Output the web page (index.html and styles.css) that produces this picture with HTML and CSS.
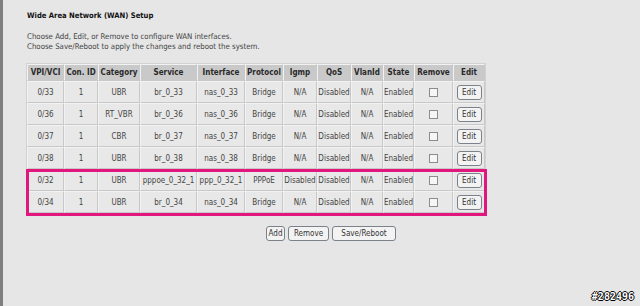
FILE: index.html
```html
<!DOCTYPE html>
<html lang="en">
<head>
    <meta charset="UTF-8">
    <title>Wide Area Network (WAN) Setup</title>
    <link rel="stylesheet" href="styles.css">
</head>
<body>
    <div class="page">
        <h1>Wide Area Network (WAN) Setup</h1>
        <p class="intro">Choose Add, Edit, or Remove to configure WAN interfaces.<br>
        Choose Save/Reboot to apply the changes and reboot the system.</p>

        <div class="table-wrap">
            <table class="wan">
                <colgroup>
                    <col style="width:37px"><col style="width:34px"><col style="width:42px">
                    <col style="width:57px"><col style="width:48px"><col style="width:38px">
                    <col style="width:34px"><col style="width:34px"><col style="width:32px">
                    <col style="width:31px"><col style="width:39px"><col style="width:32px">
                </colgroup>
                <tr>
                    <th>VPI/VCI</th><th>Con. ID</th><th>Category</th><th>Service</th><th>Interface</th><th>Protocol</th>
                    <th>Igmp</th><th>QoS</th><th>VlanId</th><th>State</th><th>Remove</th><th>Edit</th>
                </tr>
                <tr>
                    <td>0/33</td><td>1</td><td>UBR</td><td>br_0_33</td><td>nas_0_33</td><td>Bridge</td>
                    <td>N/A</td><td>Disabled</td><td>N/A</td><td>Enabled</td>
                    <td><input type="checkbox" class="chk"></td><td><button class="btn">Edit</button></td>
                </tr>
                <tr>
                    <td>0/36</td><td>1</td><td>RT_VBR</td><td>br_0_36</td><td>nas_0_36</td><td>Bridge</td>
                    <td>N/A</td><td>Disabled</td><td>N/A</td><td>Enabled</td>
                    <td><input type="checkbox" class="chk"></td><td><button class="btn">Edit</button></td>
                </tr>
                <tr>
                    <td>0/37</td><td>1</td><td>CBR</td><td>br_0_37</td><td>nas_0_37</td><td>Bridge</td>
                    <td>N/A</td><td>Disabled</td><td>N/A</td><td>Enabled</td>
                    <td><input type="checkbox" class="chk"></td><td><button class="btn">Edit</button></td>
                </tr>
                <tr>
                    <td>0/38</td><td>1</td><td>UBR</td><td>br_0_38</td><td>nas_0_38</td><td>Bridge</td>
                    <td>N/A</td><td>Disabled</td><td>N/A</td><td>Enabled</td>
                    <td><input type="checkbox" class="chk"></td><td><button class="btn">Edit</button></td>
                </tr>
                <tr>
                    <td>0/32</td><td>1</td><td>UBR</td><td>pppoe_0_32_1</td><td>ppp_0_32_1</td><td>PPPoE</td>
                    <td>Disabled</td><td>Disabled</td><td>N/A</td><td>Enabled</td>
                    <td><input type="checkbox" class="chk"></td><td><button class="btn">Edit</button></td>
                </tr>
                <tr>
                    <td>0/34</td><td>1</td><td>UBR</td><td>br_0_34</td><td>nas_0_34</td><td>Bridge</td>
                    <td>N/A</td><td>Disabled</td><td>N/A</td><td>Enabled</td>
                    <td><input type="checkbox" class="chk"></td><td><button class="btn">Edit</button></td>
                </tr>
            </table>
            <!-- annotation box around the last two rows -->
            <div class="mark"></div>
        </div>

        <div class="actions">
            <button class="btn">Add</button>
            <button class="btn">Remove</button>
            <button class="btn save">Save/Reboot</button>
        </div>
    </div>
    <div class="stamp">#282496</div>
</body>
</html>
```

FILE: styles.css
```css
body {
    margin: 0;
    height: 306px;
    background: #e6e6e6;
    border-left: 3px solid #7f7f7f;
    font-family: 'DejaVu Sans Condensed', 'DejaVu Sans', sans-serif;
    font-size: 8px;
    color: #444;
    overflow: hidden;
}
.page {
    padding: 11px 5px 0 24px;
}
h1 {
    margin: 0;
    font-size: 7.6px;
    line-height: 10px;
    color: #111;
}
.intro {
    margin: 11px 0 0;
    line-height: 10px;
    font-size: 7.8px;
}
.table-wrap {
    position: relative;
    margin: 11px 0 0 -1px;
    width: 458px;
}
.wan {
    border-collapse: separate;
    border-spacing: 0;
    table-layout: fixed;
    width: 458px;
    border: 1px solid #d2d2d2;
}
.wan th,
.wan td {
    padding: 0;
    text-align: center;
    white-space: nowrap;
    overflow: hidden;
    border-left: 1px solid #f2f2f2;
    border-top: 1px solid #f2f2f2;
    border-right: 1px solid #c8c8c8;
    border-bottom: 1px solid #c8c8c8;
}
.wan th {
    height: 15px;
    background: #c9c9c9;
    color: #2a2a2a;
    font-weight: bold;
}
.wan td {
    height: 20px;
    background: #e8e8e8;
}
.chk {
    appearance: none;
    margin: 3px 0 0;
    width: 9px;
    height: 9px;
    border: 1px solid #8c8c8c;
    background: #f6f6f6;
}
.btn {
    font-family: inherit;
    font-size: 8px;
    color: #333;
    height: 15px;
    padding: 0;
    background: #f3f3f3;
    border: 1px solid #7b8289;
    border-radius: 3px;
}
.wan .btn {
    width: 25px;
    margin-top: 1px;
}
.mark {
    position: absolute;
    left: 0;
    top: 106px;
    width: 455px;
    height: 41px;
    border: 3px solid #e2177e;
}
.actions {
    display: flex;
    justify-content: center;
    gap: 3px;
    margin-top: 12px;
}
.actions .btn:nth-child(1) { width: 19px; }
.actions .btn:nth-child(2) { width: 41px; }
.actions .btn.save { width: 64px; }
.stamp {
    position: absolute;
    right: 6px;
    bottom: 4px;
    font-family: 'DejaVu Sans Mono', monospace;
    font-weight: bold;
    font-size: 10px;
    color: #fff;
    text-shadow: 1px 0 0 #000, -1px 0 0 #000, 0 1px 0 #000, 0 -1px 0 #000;
}
```
